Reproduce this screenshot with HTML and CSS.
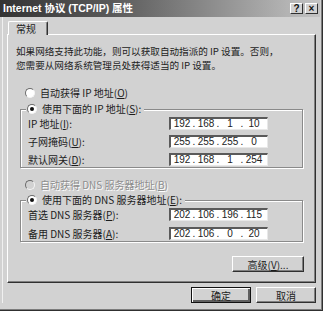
FILE: index.html
```html
<!DOCTYPE html>
<html>
<head>
  <meta charset="utf-8">
  <title>Internet 协议 (TCP/IP) 属性</title>
  <link rel="stylesheet" href="styles.css">
</head>
<body>
  <div class="window">
    <div class="title-bar">
      <span class="title-text">Internet 协议 (TCP/IP) 属性</span>
      <div class="title-buttons">
        <span class="title-btn">?</span>
        <span class="title-btn">×</span>
      </div>
    </div>
    <div class="dialog-body">
      <div class="tabs">
        <div class="tab">常规</div>
      </div>
      <div class="panel">
        <p class="intro">如果网络支持此功能，则可以获取自动指派的 IP 设置。否则，<br>您需要从网络系统管理员处获得适当的 IP 设置。</p>

        <div class="option option-top"><span class="radio"></span>自动获得 IP 地址(<u>O</u>)</div>
        <fieldset class="group group-ip">
          <legend class="option"><span class="radio checked"></span>使用下面的 IP 地址(<u>S</u>):</legend>
          <div class="row">
            <label>IP 地址(<u>I</u>):</label>
            <div class="ip-field"><span>192</span><i>.</i><span>168</span><i>.</i><span>1</span><i>.</i><span>10</span></div>
          </div>
          <div class="row">
            <label>子网掩码(<u>U</u>):</label>
            <div class="ip-field"><span>255</span><i>.</i><span>255</span><i>.</i><span>255</span><i>.</i><span>0</span></div>
          </div>
          <div class="row">
            <label>默认网关(<u>D</u>):</label>
            <div class="ip-field"><span>192</span><i>.</i><span>168</span><i>.</i><span>1</span><i>.</i><span>254</span></div>
          </div>
        </fieldset>

        <div class="option option-dns disabled"><span class="radio"></span>自动获得 DNS 服务器地址(<u>B</u>)</div>
        <fieldset class="group group-dns">
          <legend class="option"><span class="radio checked"></span>使用下面的 DNS 服务器地址(<u>E</u>):</legend>
          <div class="row">
            <label>首选 DNS 服务器(<u>P</u>):</label>
            <div class="ip-field"><span>202</span><i>.</i><span>106</span><i>.</i><span>196</span><i>.</i><span>115</span></div>
          </div>
          <div class="row">
            <label>备用 DNS 服务器(<u>A</u>):</label>
            <div class="ip-field"><span>202</span><i>.</i><span>106</span><i>.</i><span>0</span><i>.</i><span>20</span></div>
          </div>
        </fieldset>

        <div class="advanced-row">
          <button class="btn btn-advanced">高级(<u>V</u>)...</button>
        </div>
      </div>
      <div class="footer">
        <button class="btn btn-default">确定</button>
        <button class="btn">取消</button>
      </div>
    </div>
  </div>
</body>
</html>
```

FILE: styles.css
```css
/* Windows 2000 style dialog, greyscale */
body {
  margin: 0;
  padding: 0;
  background-color: #d2d2d2;
  font-family: "Noto Sans CJK SC", "Liberation Sans", sans-serif;
  font-size: 10px;
  color: #1c1c1c;
}

.window {
  width: 323px;
  height: 311px;
  box-sizing: border-box;
  padding: 0 3px 0 0;
  box-shadow: inset -1px -1px 0 #303030, inset -2px -2px 0 #7c7c7c;
}

.title-bar {
  height: 17px;
  display: flex;
  align-items: center;
  justify-content: space-between;
  padding: 0 2px 0 3px;
  background-image: linear-gradient(to right, #333333, #5a5a5a 35%, #c4c4c4);
}

.title-text {
  font-family: "Liberation Sans", "Noto Sans CJK SC", sans-serif;
  font-size: 10.5px;
  font-weight: bold;
  color: #ffffff;
  line-height: 17px;
}

.title-buttons {
  display: flex;
  gap: 2px;
}

.title-btn {
  width: 13px;
  height: 11px;
  box-sizing: border-box;
  background-color: #d2d2d2;
  border: 1px solid;
  border-color: #ffffff #303030 #303030 #ffffff;
  font-family: "Liberation Sans", sans-serif;
  font-size: 10px;
  font-weight: bold;
  line-height: 9px;
  text-align: center;
  color: #111111;
}

.dialog-body {
  margin-left: 2px;
  border-left: 1px solid #f0f0f0;
  padding: 4px 4px 0 4px;
}

.tabs {
  display: flex;
  position: relative;
  z-index: 1;
  margin-bottom: -1px;
}

.tab {
  margin-left: 1px;
  width: 40px;
  height: 14px;
  box-sizing: border-box;
  background-color: #d2d2d2;
  border: 1px solid #ffffff;
  border-right: 1px solid #303030;
  border-bottom: none;
  border-radius: 2px 2px 0 0;
  box-shadow: inset -1px 0 0 #808080;
  line-height: 13px;
  padding-left: 7px;
}

.panel {
  height: 249px;
  box-sizing: border-box;
  border: 1px solid;
  border-color: #ffffff #303030 #303030 #ffffff;
  box-shadow: inset -1px -1px 0 #808080;
  padding: 9px 12px 0 8px;
}

.intro {
  margin: 0;
  font-size: 9.6px;
  line-height: 14px;
}

.option {
  display: flex;
  align-items: center;
  line-height: 14px;
  height: 14px;
}

.option-top {
  margin: 14px 0 0 9px;
}

.option-dns {
  margin: 10px 0 0 9px;
}

.disabled {
  color: #8e8e8e;
  text-shadow: 1px 1px 0 #ffffff;
}

.radio {
  width: 10px;
  height: 10px;
  box-sizing: border-box;
  margin-right: 5px;
  border-radius: 50%;
  border: 1px solid;
  border-color: #6a6a6a #f4f4f4 #f4f4f4 #6a6a6a;
  background-color: #ffffff;
  display: flex;
  align-items: center;
  justify-content: center;
}

.disabled .radio {
  background-color: #d2d2d2;
}

.radio.checked::after {
  content: "";
  width: 4px;
  height: 4px;
  border-radius: 50%;
  background-color: #111111;
}

.group {
  margin: 2px 0 0 4px;
  padding: 1px 4px 1px 5px;
  border: 1px solid #8a8a8a;
  box-shadow: inset 1px 1px 0 #ffffff, 1px 1px 0 #ffffff;
}

.group legend {
  padding: 0 3px 0 1px;
  background-color: #d2d2d2;
}

.group-dns {
  margin-top: 1px;
}

.row {
  display: grid;
  grid-template-columns: 143px 99px;
  align-items: center;
  height: 13px;
}

.group-ip .row + .row {
  margin-top: 5px;
}

.group-dns .row + .row {
  margin-top: 6px;
}

.row label {
  padding-left: 2px;
  line-height: 13px;
}

.ip-field {
  height: 13px;
  box-sizing: border-box;
  display: flex;
  padding-left: 1px;
  background-color: #ffffff;
  border-top: 2px solid #5a5a5a;
  border-left: 2px solid #5a5a5a;
  border-right: 1px solid #e8e8e8;
  border-bottom: 1px solid #e8e8e8;
  font-family: "Liberation Sans", sans-serif;
  font-size: 10px;
  line-height: 10px;
  color: #222222;
}

.ip-field span {
  width: 20px;
  text-align: center;
}

.ip-field i {
  width: 4px;
  font-style: normal;
  text-align: center;
}

.advanced-row {
  display: flex;
  justify-content: flex-end;
  margin: 14px -1px 0 0;
}

.btn {
  height: 16px;
  box-sizing: border-box;
  padding: 0;
  background-color: #d2d2d2;
  border: 1px solid;
  border-color: #ffffff #303030 #303030 #ffffff;
  box-shadow: inset -1px -1px 0 #808080;
  font-family: "Noto Sans CJK SC", "Liberation Sans", sans-serif;
  font-size: 10px;
  line-height: 13px;
  color: #1c1c1c;
}

.btn-advanced {
  width: 72px;
}

.footer {
  display: flex;
  justify-content: flex-end;
  gap: 5px;
  margin-top: 4px;
}

.footer .btn {
  width: 60px;
}

.btn-default {
  outline: 1px solid #111111;
  outline-offset: -1px;
  border-color: #ffffff #303030 #303030 #ffffff;
  box-shadow: inset 1px 1px 0 #ffffff, inset -2px -2px 0 #606060;
}
```
